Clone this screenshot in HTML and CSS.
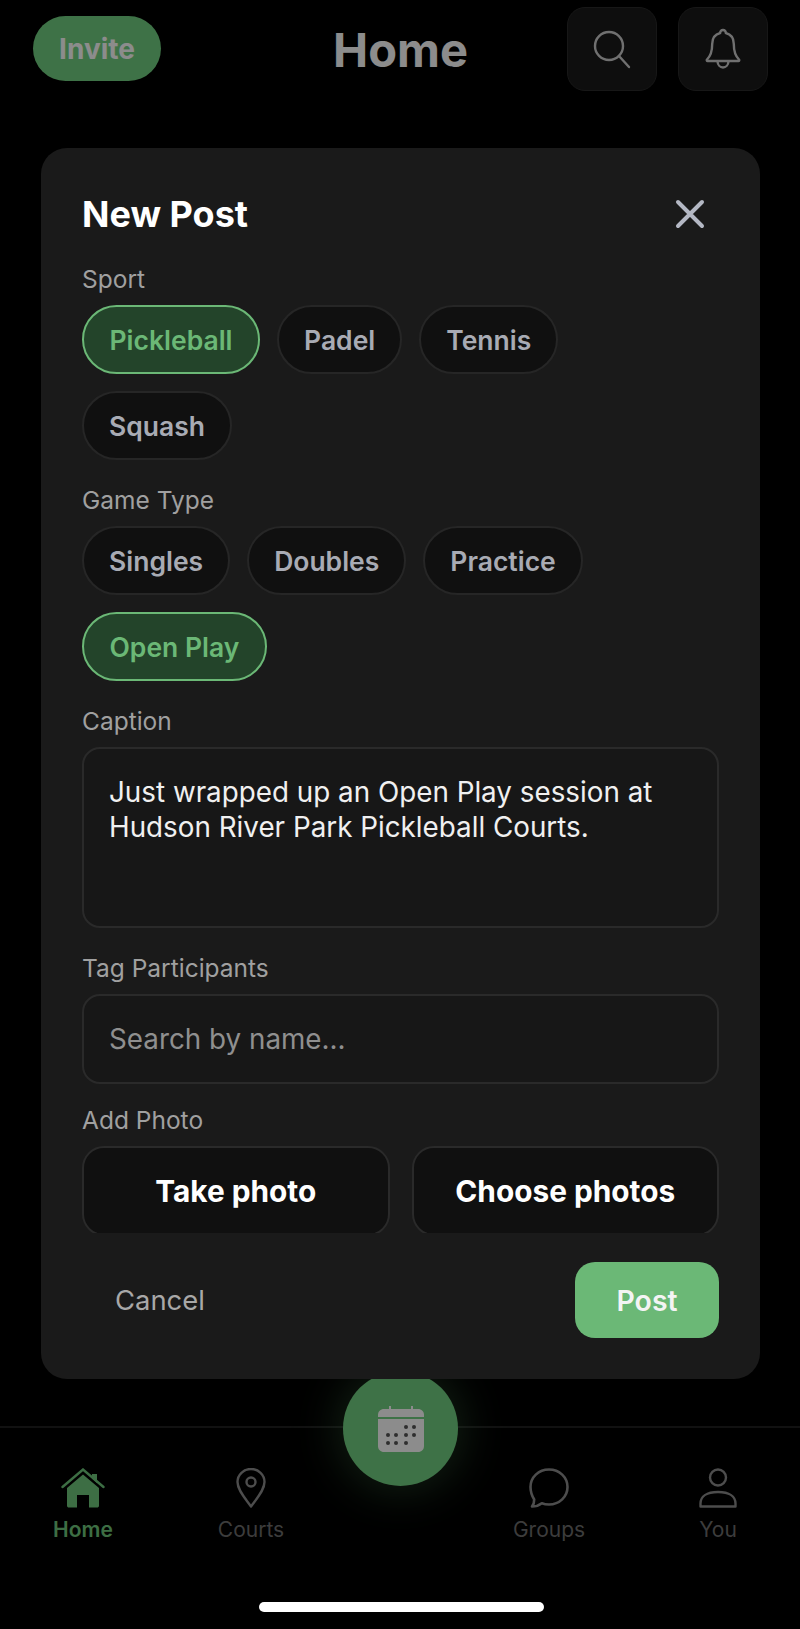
FILE: index.html
```html
<!DOCTYPE html>
<html lang="en">
<head>
    <meta charset="UTF-8">
    <meta name="viewport" content="width=device-width, initial-scale=1.0">
    <title>Home</title>
    <link rel="stylesheet" href="styles.css">
</head>
<body>
    <div class="screen">
        <!-- Top bar -->
        <header class="topbar">
            <div class="topbar-left">
                <button class="invite">Invite</button>
            </div>
            <h1 class="page-title">Home</h1>
            <div class="topbar-right">
                <button class="icon-btn">
                    <svg width="40" height="40" viewBox="0 0 40 40" fill="none" stroke="#ccc" stroke-width="2.4" stroke-linecap="round">
                        <circle cx="17" cy="17" r="14"/>
                        <path d="M27 27l10 11"/>
                    </svg>
                </button>
                <button class="icon-btn">
                    <svg width="36" height="42" viewBox="0 0 36 42" fill="none" stroke="#ccc" stroke-width="2.4" stroke-linejoin="round">
                        <path d="M18 2c-1.800 0-2.800 1.200-2.800 3-5 1.300-8 5.500-8 11 0 8-1.500 12-5.200 15.500-.6.600-.2 1.500.6 1.500h30.800c.8 0 1.200-.9.600-1.500-3.700-3.500-5.200-7.500-5.200-15.500 0-5.500-3-9.700-8-11 0-1.800-1-3-2.800-3z"/>
                        <path d="M12.500 33.500c.3 3.500 2.600 6 5.500 6s5.200-2.500 5.500-6"/>
                    </svg>
                </button>
            </div>
        </header>

        <div class="spacer"></div>

        <!-- Bottom tabs -->
        <nav class="tabbar">
            <a class="tab tab-active">
                <svg width="44" height="40" viewBox="0 0 44 40">
                    <path d="M1.500 19L22 1.500 42.500 19" fill="none" stroke="#6fc97c" stroke-width="2.4" stroke-linecap="round"/>
                    <path d="M31 6h5v9l-5-4.500z" fill="#6fc97c"/>
                    <path d="M22 6.500L38 20v17.500c0 1.400-.8 2-2 2h-8V27h-12v12.500H8c-1.200 0-2-.6-2-2V20z" fill="#6fc97c"/>
                </svg>
                <span>Home</span>
            </a>
            <a class="tab">
                <svg width="30" height="40" viewBox="0 0 30 40" fill="none" stroke="#8c8c8c" stroke-width="2.400" stroke-linejoin="round">
                    <path d="M15 38.500C9 30 1.500 22 1.500 14a13.500 13 0 0 1 27 0c0 8-7.500 16-13.500 24.500z"/>
                    <circle cx="15" cy="14" r="4.500"/>
                </svg>
                <span>Courts</span>
            </a>
            <div class="tab-gap"></div>
            <a class="tab">
                <svg width="40" height="40" viewBox="0 0 40 40" fill="none" stroke="#8c8c8c" stroke-width="2.600" stroke-linejoin="round">
                    <path d="M20 1.500c10.500 0 18.500 7.800 18.500 17.500S30.500 36.500 20 36.500c-2.500 0-5-.4-7.200-1.300-2.500 2-6 3.300-9.800 3.300 1.500-2 2.300-4.300 2.200-7C3 28 1.500 23.800 1.500 19 1.500 9.300 9.500 1.500 20 1.500z"/>
                </svg>
                <span>Groups</span>
            </a>
            <a class="tab tab-last">
                <svg width="38" height="40" viewBox="0 0 38 40" fill="none" stroke="#8c8c8c" stroke-width="2.400" stroke-linejoin="round">
                    <circle cx="19" cy="9.500" r="8"/>
                    <path d="M1.500 38.500v-3c0-7 6-11.500 17.500-11.500s17.500 4.500 17.500 11.500v3z"/>
                </svg>
                <span>You</span>
            </a>
        </nav>

        <!-- Calendar button -->
        <button class="fab">
            <svg width="48" height="48" viewBox="0 0 48 48" fill="#fff">
                <path d="M12 1h2v4h-2zM34 1h2v4h-2z"/>
                <path d="M7 4h34c3.500 0 6 2.500 6 6v2H1v-2c0-3.500 2.500-6 6-6z"/>
                <path d="M1 14h46v27c0 3.500-2.500 6-6 6H7c-3.500 0-6-2.500-6-6z"/>
                <g fill="#555">
                    <circle cx="29" cy="22" r="2"/><circle cx="37" cy="22" r="2"/>
                    <circle cx="11" cy="30" r="2"/><circle cx="19" cy="30" r="2"/><circle cx="29" cy="30" r="2"/><circle cx="37" cy="30" r="2"/>
                    <circle cx="11" cy="38" r="2"/><circle cx="19" cy="38" r="2"/><circle cx="29" cy="38" r="2"/>
                </g>
            </svg>
        </button>

        <!-- Dimmed overlay with modal -->
        <div class="overlay">
            <div class="modal">
                <div class="modal-head">
                    <h2 class="modal-title">New Post</h2>
                    <svg class="close" width="30" height="30" viewBox="0 0 30 30" fill="none" stroke="#b4b8c4" stroke-width="4" stroke-linecap="round">
                        <path d="M3 3l24 24M27 3L3 27"/>
                    </svg>
                </div>

                <div class="modal-scroll">
                    <section class="field">
                        <div class="label">Sport</div>
                        <div class="chips">
                            <span class="chip chip-on">Pickleball</span>
                            <span class="chip">Padel</span>
                            <span class="chip">Tennis</span>
                            <span class="chip">Squash</span>
                        </div>
                    </section>

                    <section class="field">
                        <div class="label">Game Type</div>
                        <div class="chips">
                            <span class="chip">Singles</span>
                            <span class="chip">Doubles</span>
                            <span class="chip">Practice</span>
                            <span class="chip chip-on">Open Play</span>
                        </div>
                    </section>

                    <section class="field">
                        <div class="label">Caption</div>
                        <div class="textbox caption">Just wrapped up an Open Play session at<br>Hudson River Park Pickleball Courts.</div>
                    </section>

                    <section class="field">
                        <div class="label">Tag Participants</div>
                        <div class="textbox search">Search by name...</div>
                    </section>

                    <section class="field field-photo">
                        <div class="label">Add Photo</div>
                        <div class="photo-btns">
                            <button class="photo-btn">Take photo</button>
                            <button class="photo-btn">Choose photos</button>
                        </div>
                    </section>
                </div>

                <div class="modal-foot">
                    <button class="cancel">Cancel</button>
                    <button class="post">Post</button>
                </div>
            </div>
        </div>

        <div class="home-indicator"></div>
    </div>
</body>
</html>
```

FILE: styles.css
```css
* {
    box-sizing: border-box;
    margin: 0;
    padding: 0;
}

body {
    background-color: #000;
    font-family: Inter, 'Liberation Sans', sans-serif;
}

button {
    font-family: inherit;
    border: none;
    background: none;
}

.screen {
    position: relative;
    width: 800px;
    height: 1629px;
    overflow: hidden;
    background-color: #000;
    display: flex;
    flex-direction: column;
}

/* Top bar */
.topbar {
    display: grid;
    grid-template-columns: 1fr auto 1fr;
    align-items: start;
    padding: 7px 32px 0 33px;
}

.invite {
    width: 128px;
    height: 65px;
    margin-top: 9px;
    border-radius: 33px;
    background-color: #72d081;
    color: #fff;
    font-size: 28px;
    font-weight: 700;
}

.page-title {
    margin-top: 13px;
    font-size: 47px;
    line-height: 60px;
    font-weight: 700;
    color: #fff;
}

.topbar-right {
    display: flex;
    justify-content: flex-end;
    gap: 21px;
}

.icon-btn {
    width: 90px;
    height: 84px;
    border-radius: 18px;
    background-color: #1a1a1a;
    border: 1px solid #2a2a2a;
    display: flex;
    align-items: center;
    justify-content: center;
}

.spacer {
    flex: 1;
}

/* Tabs */
.tabbar {
    height: 203px;
    border-top: 2px solid #1f1f1f;
    padding-top: 40px;
    display: grid;
    grid-template-columns: 166px 170px 130px 166px 168px;
    align-items: start;
}

.tab {
    display: flex;
    flex-direction: column;
    align-items: center;
    gap: 8px;
    font-size: 21px;
    line-height: 28px;
    color: #6e6e6e;
}

.tab-active {
    color: #6fc97c;
    font-weight: 600;
}

.tab-last {
    padding-left: 4px;
}

.fab {
    position: absolute;
    left: 343px;
    top: 1371px;
    width: 115px;
    height: 115px;
    border-radius: 50%;
    background-color: #72d081;
    box-shadow: 0 0 50px rgba(107, 184, 118, 0.4);
    display: flex;
    align-items: center;
    justify-content: center;
}

/* Overlay and modal */
.overlay {
    position: absolute;
    inset: 0;
    background-color: rgba(0, 0, 0, 0.45);
    padding: 148px 40px 0 41px;
}

.modal {
    height: 1231px;
    border-radius: 26px;
    background-color: #1a1a1a;
    padding: 45px 41px 0 41px;
}

.modal-head {
    display: flex;
    justify-content: space-between;
    align-items: center;
    height: 42px;
    padding-right: 14px;
}

.modal-title {
    font-size: 36px;
    font-weight: 700;
    color: #fff;
}

.modal-scroll {
    height: 968px;
    margin-top: 30px;
    overflow: hidden;
}

.field {
    margin-top: 26px;
}

.field:first-child {
    margin-top: 0;
}

.field-photo {
    margin-top: 22px;
}

.label {
    font-size: 24.500px;
    line-height: 28px;
    margin-bottom: 12px;
    color: #a0a0a0;
}

.chips {
    display: flex;
    flex-wrap: wrap;
    gap: 17px;
}

.chip {
    height: 69px;
    padding: 0 25px;
    border-radius: 35px;
    background-color: #101010;
    border: 2px solid #262626;
    color: #a8abb4;
    font-size: 26.500px;
    font-weight: 600;
    line-height: 67px;
}

.chip-on {
    background-color: #23442a;
    border-color: #6bb876;
    color: #6bb876;
    padding: 0 25.500px;
}

.textbox {
    border: 2px solid #2a2a2a;
    border-radius: 18px;
    padding: 0 25px;
    font-size: 27.800px;
    line-height: 35px;
    background-color: #171717;
}

.caption {
    height: 181px;
    padding-top: 26px;
    color: #f0f0f0;
}

.search {
    height: 90px;
    line-height: 86px;
    color: #8f8f8f;
}

.photo-btns {
    display: grid;
    grid-template-columns: 1fr 1fr;
    gap: 22px;
}

.photo-btn {
    height: 90px;
    border: 2px solid #2a2a2a;
    border-radius: 22px;
    background-color: #101010;
    color: #fff;
    font-size: 29.800px;
    font-weight: 700;
}

.modal-foot {
    display: flex;
    justify-content: space-between;
    align-items: center;
    margin-top: 29px;
}

.cancel {
    padding-left: 33px;
    color: #a8a8a8;
    font-size: 27.400px;
}

.post {
    width: 144px;
    height: 76px;
    border-radius: 20px;
    background-color: #6bb876;
    color: #f4f4f4;
    font-size: 28.400px;
    font-weight: 600;
}

.home-indicator {
    position: absolute;
    left: 259px;
    top: 1602px;
    width: 285px;
    height: 10px;
    border-radius: 5px;
    background-color: #fff;
}
```
